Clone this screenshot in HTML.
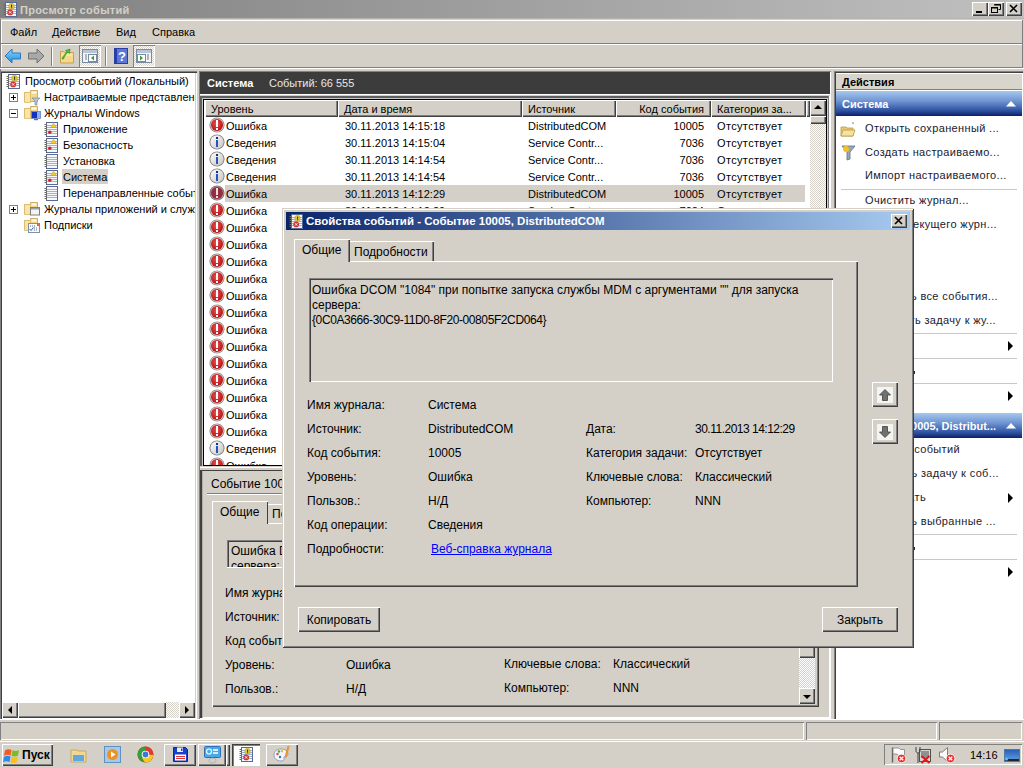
<!DOCTYPE html>
<html><head><meta charset="utf-8"><style>
html,body{margin:0;padding:0}
body{width:1024px;height:768px;overflow:hidden;position:relative;background:#d4d0c8;font-family:"Liberation Sans",sans-serif;font-size:11px;color:#000}
.t{position:absolute;white-space:pre;line-height:14px}
svg{overflow:visible}
</style></head><body>
<div style="position:absolute;left:0px;top:0px;width:1024px;height:18px;background:linear-gradient(to right,#808080,#c0c0c0)"></div>
<svg style="position:absolute;left:3px;top:2px" width="15" height="15" viewBox="0 0 15 15"><rect x="2.5" y="0.5" width="11" height="14" fill="#f6f8fc" stroke="#56699a"/><path d="M3 3.5h10M3 5.5h10M3 7.5h10M3 9.5h10M3 11.5h10" stroke="#9eb2d6"/><path d="M0.5 2.5h2.5M0.5 4.5h2.5M0.5 6.5h2.5M0.5 8.5h2.5M0.5 10.5h2.5M0.5 12.5h2.5" stroke="#6a6a6a"/><path d="M8.5 1.2c1.8 0 2.6 1.2 2.6 2.6v2.6H5.9V3.8c0-1.4.8-2.6 2.6-2.6z" fill="#e8cc28" stroke="#a89018" stroke-width="0.5"/><rect x="8" y="2.6" width="1.1" height="2.3" fill="#303030"/><rect x="8" y="5.3" width="1.1" height="0.9" fill="#303030"/><circle cx="7.2" cy="10.4" r="2.9" fill="#c83838"/><path d="M6 9.2l2.4 2.4M8.4 9.2l-2.4 2.4" stroke="#fff" stroke-width="0.9"/></svg>
<div class="t" style="left:20px;top:3px;font-weight:bold;color:#d4d0c8;letter-spacing:0.3px">Просмотр событий</div>
<div style="position:absolute;left:972px;top:2px;width:16px;height:14px;background:#d4d0c8;box-shadow:inset 1px 1px 0 #fff, inset -1px -1px 0 #404040, inset -2px -2px 0 #808080;"></div>
<div style="position:absolute;left:988px;top:2px;width:16px;height:14px;background:#d4d0c8;box-shadow:inset 1px 1px 0 #fff, inset -1px -1px 0 #404040, inset -2px -2px 0 #808080;"></div>
<div style="position:absolute;left:1006px;top:2px;width:16px;height:14px;background:#d4d0c8;box-shadow:inset 1px 1px 0 #fff, inset -1px -1px 0 #404040, inset -2px -2px 0 #808080;"></div>
<svg style="position:absolute;left:972px;top:2px" width="16" height="14" viewBox="0 0 16 14"><rect x="4" y="9" width="6" height="2" fill="#000"/></svg>
<svg style="position:absolute;left:988px;top:2px" width="16" height="14" viewBox="0 0 16 14"><path d="M6.5 2.5h6v5h-2" fill="none" stroke="#000"/><path d="M6 3h7" stroke="#000"/><rect x="3.5" y="5.5" width="6" height="5" fill="none" stroke="#000"/><path d="M3 6h7" stroke="#000"/></svg>
<svg style="position:absolute;left:1006px;top:2px" width="16" height="14" viewBox="0 0 16 14"><path d="M4 3l7 7M11 3l-7 7" stroke="#000" stroke-width="1.6"/></svg>
<div style="position:absolute;left:0px;top:18px;width:1024px;height:1px;background:#b8b4ac"></div>
<div style="position:absolute;left:0px;top:19px;width:1px;height:53px;background:#808080"></div>
<div style="position:absolute;left:1px;top:20px;width:1022px;height:1px;background:#fff"></div>
<div style="position:absolute;left:1px;top:20px;width:1px;height:24px;background:#fff"></div>
<div style="position:absolute;left:1px;top:43px;width:1022px;height:1px;background:#808080"></div>
<div style="position:absolute;left:1022px;top:20px;width:1px;height:24px;background:#808080"></div>
<div class="t" style="left:10px;top:25px;">Файл</div>
<div class="t" style="left:52px;top:25px;">Действие</div>
<div class="t" style="left:116px;top:25px;">Вид</div>
<div class="t" style="left:152px;top:25px;">Справка</div>
<div style="position:absolute;left:1px;top:44px;width:1022px;height:1px;background:#fff"></div>
<div style="position:absolute;left:1px;top:44px;width:1px;height:23px;background:#fff"></div>
<div style="position:absolute;left:1px;top:67px;width:1022px;height:1px;background:#808080"></div>
<div style="position:absolute;left:0px;top:68px;width:1024px;height:1px;background:#fff"></div>
<div style="position:absolute;left:1022px;top:44px;width:1px;height:24px;background:#808080"></div>
<svg style="position:absolute;left:4px;top:48px" width="18" height="16" viewBox="0 0 18 16"><defs><linearGradient id="ga" x1="0" y1="0" x2="0" y2="1"><stop offset="0" stop-color="#8fd8ff"/><stop offset="1" stop-color="#1a8ad8"/></linearGradient></defs><path d="M1 8l7-7v4h8.5v6H8v4z" fill="url(#ga)" stroke="#2a78c0" stroke-width="1"/></svg>
<svg style="position:absolute;left:27px;top:48px" width="18" height="16" viewBox="0 0 18 16"><path d="M17 8l-7-7v4H1.5v6H10v4z" fill="#a8a8a8" stroke="#707070" stroke-width="1"/></svg>
<div style="position:absolute;left:51px;top:47px;width:1px;height:19px;background:#808080"></div>
<div style="position:absolute;left:52px;top:47px;width:1px;height:19px;background:#fff"></div>
<svg style="position:absolute;left:59px;top:47px" width="17" height="17" viewBox="0 0 17 17"><path d="M1.5 4.5h3l1 1h9v10.5h-13z" fill="#f6d88a" stroke="#c8a050"/><path d="M2.5 8h11" stroke="#fff0c0"/><path d="M3 12c1-3 3-5 5-7l-1.5-1.5 4.5-1.5-0.5 4.5-1.5-1.5c-2 2-3.5 4-4.5 7z" fill="#50c040" stroke="#209020" stroke-width="0.6"/></svg>
<div style="position:absolute;left:79px;top:45px;width:22px;height:22px;background:repeating-conic-gradient(#fff 0 25%,#d4d0c8 0 50%) 0 0/2px 2px;box-shadow:inset 1px 1px 0 #808080, inset -1px -1px 0 #fff"></div>
<svg style="position:absolute;left:82px;top:49px" width="16" height="14" viewBox="0 0 16 14"><rect x="0.5" y="0.5" width="15" height="13" fill="#f4f4f4" stroke="#7a8aa0"/><rect x="1" y="1" width="14" height="3" fill="#b8c4d8"/><path d="M3 6h2M3 8h2M3 10h2" stroke="#6a7a90"/><rect x="6.5" y="5.5" width="8" height="7" fill="#fff" stroke="#7a8aa0"/><path d="M12 6.5v5l-3-2.5z" fill="#30a030"/></svg>
<div style="position:absolute;left:105px;top:47px;width:1px;height:19px;background:#808080"></div>
<div style="position:absolute;left:106px;top:47px;width:1px;height:19px;background:#fff"></div>
<svg style="position:absolute;left:114px;top:48px" width="14" height="16" viewBox="0 0 14 16"><rect x="0" y="0" width="14" height="16" fill="#2a3ea8"/><rect x="3" y="1" width="10" height="14" fill="#5a78d8"/><text x="8" y="13" font-family="Liberation Sans" font-weight="bold" font-size="13" fill="#fff" text-anchor="middle">?</text></svg>
<div style="position:absolute;left:133px;top:45px;width:22px;height:22px;background:repeating-conic-gradient(#fff 0 25%,#d4d0c8 0 50%) 0 0/2px 2px;box-shadow:inset 1px 1px 0 #808080, inset -1px -1px 0 #fff"></div>
<svg style="position:absolute;left:136px;top:49px" width="16" height="14" viewBox="0 0 16 14"><rect x="0.5" y="0.5" width="15" height="13" fill="#f4f4f4" stroke="#7a8aa0"/><rect x="1" y="1" width="14" height="3" fill="#b8c4d8"/><path d="M11 6h2M11 8h2M11 10h2" stroke="#6a7a90"/><rect x="1.5" y="5.5" width="8" height="7" fill="#fff" stroke="#7a8aa0"/><path d="M4 6.5v5l3-2.5z" fill="#30a030"/></svg>
<div style="position:absolute;left:0px;top:71px;width:197px;height:648px;background:#fff;box-shadow:inset 1px 1px 0 #808080, inset 2px 2px 0 #404040, inset -1px -1px 0 #fff, inset -2px -2px 0 #d4d0c8"></div>
<svg style="position:absolute;left:6px;top:74px" width="15" height="15" viewBox="0 0 15 15"><rect x="2.5" y="0.5" width="11" height="14" fill="#f6f8fc" stroke="#56699a"/><path d="M3 3.5h10M3 5.5h10M3 7.5h10M3 9.5h10M3 11.5h10" stroke="#9eb2d6"/><path d="M0.5 2.5h2.5M0.5 4.5h2.5M0.5 6.5h2.5M0.5 8.5h2.5M0.5 10.5h2.5M0.5 12.5h2.5" stroke="#6a6a6a"/><path d="M8.5 1.2c1.8 0 2.6 1.2 2.6 2.6v2.6H5.9V3.8c0-1.4.8-2.6 2.6-2.6z" fill="#e8cc28" stroke="#a89018" stroke-width="0.5"/><rect x="8" y="2.6" width="1.1" height="2.3" fill="#303030"/><rect x="8" y="5.3" width="1.1" height="0.9" fill="#303030"/><circle cx="7.2" cy="10.4" r="2.9" fill="#c83838"/><path d="M6 9.2l2.4 2.4M8.4 9.2l-2.4 2.4" stroke="#fff" stroke-width="0.9"/></svg>
<div class="t" style="left:25px;top:74px;">Просмотр событий (Локальный)</div>
<svg style="position:absolute;left:9px;top:93px" width="9" height="9" viewBox="0 0 9 9"><rect x="0.5" y="0.5" width="8" height="8" fill="#fff" stroke="#808080"/><path d="M2 4.5h5" stroke="#000"/><path d="M4.5 2v5" stroke="#000"/></svg>
<svg style="position:absolute;left:24px;top:89px" width="16" height="16" viewBox="0 0 16 16"><path d="M0.5 12.5V3.5h6v-2h7v11z" fill="#f2d890" stroke="#d0b060"/><rect x="7.5" y="2.5" width="5" height="2" fill="#fffbe8"/><path d="M0.5 13.5V3.5h6v10z" fill="#f8e6a8" stroke="#d8b868" stroke-width="0.8"/><path d="M8 9h8l-3 3v4h-2v-4z" fill="#b8c8d0" stroke="#708090" stroke-width="0.6"/></svg>
<div class="t" style="left:44px;top:90px;width:151px;overflow:hidden">Настраиваемые представлени</div>
<svg style="position:absolute;left:9px;top:109px" width="9" height="9" viewBox="0 0 9 9"><rect x="0.5" y="0.5" width="8" height="8" fill="#fff" stroke="#808080"/><path d="M2 4.5h5" stroke="#000"/></svg>
<svg style="position:absolute;left:24px;top:105px" width="16" height="16" viewBox="0 0 16 16"><path d="M0.5 12.5V3.5h6v-2h7v11z" fill="#f2d890" stroke="#d0b060"/><rect x="7.5" y="2.5" width="5" height="2" fill="#fffbe8"/><path d="M0.5 13.5V3.5h6v10z" fill="#f8e6a8" stroke="#d8b868" stroke-width="0.8"/><rect x="7.5" y="6.5" width="9" height="7" fill="#8ab0f0" stroke="#6080c0" stroke-width="0.8"/><rect x="8" y="7" width="5" height="6" fill="#1030c0"/><rect x="10" y="14" width="4" height="1.2" fill="#707070"/></svg>
<div class="t" style="left:44px;top:106px;">Журналы Windows</div>
<svg style="position:absolute;left:44px;top:122px" width="15" height="15" viewBox="0 0 15 15"><rect x="2.5" y="0.5" width="11" height="14" fill="#f6f8fc" stroke="#56699a"/><path d="M3 3.5h10M3 5.5h10M3 7.5h10M3 9.5h10M3 11.5h10" stroke="#9eb2d6"/><path d="M0.5 2.5h2.5M0.5 4.5h2.5M0.5 6.5h2.5M0.5 8.5h2.5M0.5 10.5h2.5M0.5 12.5h2.5" stroke="#6a6a6a"/><path d="M9.5 1.5l3 4h-6z" fill="#f4d02a" stroke="#c0a020" stroke-width="0.6"/><circle cx="5.8" cy="10.2" r="1.7" fill="#c82828"/></svg>
<div class="t" style="left:63px;top:122px;">Приложение</div>
<svg style="position:absolute;left:44px;top:138px" width="15" height="15" viewBox="0 0 15 15"><rect x="2.5" y="0.5" width="11" height="14" fill="#f6f8fc" stroke="#56699a"/><path d="M3 3.5h10M3 5.5h10M3 7.5h10M3 9.5h10M3 11.5h10" stroke="#9eb2d6"/><path d="M0.5 2.5h2.5M0.5 4.5h2.5M0.5 6.5h2.5M0.5 8.5h2.5M0.5 10.5h2.5M0.5 12.5h2.5" stroke="#6a6a6a"/><path d="M9.5 1.5l3 4h-6z" fill="#f4d02a" stroke="#c0a020" stroke-width="0.6"/><circle cx="5.8" cy="10.2" r="1.7" fill="#c82828"/></svg>
<div class="t" style="left:63px;top:138px;">Безопасность</div>
<svg style="position:absolute;left:44px;top:154px" width="15" height="15" viewBox="0 0 15 15"><rect x="2.5" y="0.5" width="11" height="14" fill="#f6f8fc" stroke="#56699a"/><path d="M3 3.5h10M3 5.5h10M3 7.5h10M3 9.5h10M3 11.5h10" stroke="#9eb2d6"/><path d="M0.5 2.5h2.5M0.5 4.5h2.5M0.5 6.5h2.5M0.5 8.5h2.5M0.5 10.5h2.5M0.5 12.5h2.5" stroke="#6a6a6a"/></svg>
<div class="t" style="left:63px;top:154px;">Установка</div>
<div style="position:absolute;left:62px;top:169px;width:46px;height:15px;background:#d4d0c8"></div>
<svg style="position:absolute;left:44px;top:170px" width="15" height="15" viewBox="0 0 15 15"><rect x="2.5" y="0.5" width="11" height="14" fill="#f6f8fc" stroke="#56699a"/><path d="M3 3.5h10M3 5.5h10M3 7.5h10M3 9.5h10M3 11.5h10" stroke="#9eb2d6"/><path d="M0.5 2.5h2.5M0.5 4.5h2.5M0.5 6.5h2.5M0.5 8.5h2.5M0.5 10.5h2.5M0.5 12.5h2.5" stroke="#6a6a6a"/><path d="M9.5 1.5l3 4h-6z" fill="#f4d02a" stroke="#c0a020" stroke-width="0.6"/><circle cx="5.8" cy="10.2" r="1.7" fill="#c82828"/></svg>
<div class="t" style="left:63px;top:170px;">Система</div>
<svg style="position:absolute;left:44px;top:186px" width="15" height="15" viewBox="0 0 15 15"><rect x="2.5" y="0.5" width="11" height="14" fill="#f6f8fc" stroke="#56699a"/><path d="M3 3.5h10M3 5.5h10M3 7.5h10M3 9.5h10M3 11.5h10" stroke="#9eb2d6"/><path d="M0.5 2.5h2.5M0.5 4.5h2.5M0.5 6.5h2.5M0.5 8.5h2.5M0.5 10.5h2.5M0.5 12.5h2.5" stroke="#6a6a6a"/></svg>
<div class="t" style="left:63px;top:186px;width:132px;overflow:hidden">Перенаправленные событ</div>
<svg style="position:absolute;left:9px;top:205px" width="9" height="9" viewBox="0 0 9 9"><rect x="0.5" y="0.5" width="8" height="8" fill="#fff" stroke="#808080"/><path d="M2 4.5h5" stroke="#000"/><path d="M4.5 2v5" stroke="#000"/></svg>
<svg style="position:absolute;left:24px;top:201px" width="16" height="16" viewBox="0 0 16 16"><path d="M0.5 12.5V3.5h6v-2h7v11z" fill="#f2d890" stroke="#d0b060"/><rect x="7.5" y="2.5" width="5" height="2" fill="#fffbe8"/><path d="M0.5 13.5V3.5h6v10z" fill="#f8e6a8" stroke="#d8b868" stroke-width="0.8"/><rect x="6.5" y="6.5" width="9" height="7.5" fill="#f4f4f4" stroke="#808080" stroke-width="1"/><rect x="7" y="7" width="8" height="1.5" fill="#a0a0a0"/></svg>
<div class="t" style="left:44px;top:202px;width:151px;overflow:hidden">Журналы приложений и служ</div>
<svg style="position:absolute;left:24px;top:217px" width="16" height="16" viewBox="0 0 16 16"><path d="M0.5 12.5V3.5h6v-2h7v11z" fill="#f2d890" stroke="#d0b060"/><rect x="7.5" y="2.5" width="5" height="2" fill="#fffbe8"/><path d="M0.5 13.5V3.5h6v10z" fill="#f8e6a8" stroke="#d8b868" stroke-width="0.8"/><rect x="4.5" y="6.5" width="11" height="9" fill="#fafafa" stroke="#8090a8" stroke-width="1"/><path d="M6 9h1M8 9h1M10 9h1M10 11h1M12 11h1M10 13h1M12 13h1" stroke="#607090"/><path d="M5.5 12l1.5 1.5 2.5-3" fill="none" stroke="#2060c0" stroke-width="1"/><rect x="13" y="6" width="3" height="3" fill="#e06060"/></svg>
<div class="t" style="left:44px;top:218px;">Подписки</div>
<div style="position:absolute;left:2px;top:702px;width:193px;height:16px;background:repeating-conic-gradient(#fff 0 25%,#d4d0c8 0 50%) 0 0/2px 2px"></div>
<div style="position:absolute;left:2px;top:702px;width:16px;height:16px;background:#d4d0c8;box-shadow:inset 1px 1px 0 #fff, inset -1px -1px 0 #404040, inset -2px -2px 0 #808080;"></div>
<svg style="position:absolute;left:2px;top:702px" width="16" height="16" viewBox="0 0 16 16"><path d="M6 8l4-4v8z" fill="#000"/></svg>
<div style="position:absolute;left:18px;top:702px;width:148px;height:16px;background:#d4d0c8;box-shadow:inset 1px 1px 0 #fff, inset -1px -1px 0 #404040, inset -2px -2px 0 #808080;"></div>
<div style="position:absolute;left:179px;top:702px;width:16px;height:16px;background:#d4d0c8;box-shadow:inset 1px 1px 0 #fff, inset -1px -1px 0 #404040, inset -2px -2px 0 #808080;"></div>
<svg style="position:absolute;left:179px;top:702px" width="16" height="16" viewBox="0 0 16 16"><path d="M10 8l-4-4v8z" fill="#000"/></svg>
<div style="position:absolute;left:199px;top:71px;width:632px;height:648px;box-shadow:inset 1px 1px 0 #808080, inset -1px -1px 0 #fff"></div>
<div style="position:absolute;left:200px;top:72px;width:630px;height:22px;background:#3c3c3c"></div>
<div class="t" style="left:207px;top:76px;font-weight:bold;color:#fff">Система</div>
<div class="t" style="left:269px;top:76px;color:#e8e8e8">Событий: 66 555</div>
<div style="position:absolute;left:200px;top:94px;width:630px;height:1px;background:#fff"></div>
<div style="position:absolute;left:204px;top:100px;width:622px;height:365px;background:#fff"></div>
<div style="position:absolute;left:200px;top:96px;width:630px;height:2px;background:#606060"></div>
<div style="position:absolute;left:200px;top:96px;width:2px;height:370px;background:#606060"></div>
<div style="position:absolute;left:202px;top:98px;width:626px;height:1px;background:#c8c8c8"></div>
<div style="position:absolute;left:202px;top:98px;width:1px;height:368px;background:#c8c8c8"></div>
<div style="position:absolute;left:203px;top:99px;width:624px;height:1px;background:#000"></div>
<div style="position:absolute;left:203px;top:99px;width:1px;height:367px;background:#000"></div>
<div style="position:absolute;left:203px;top:465px;width:624px;height:1px;background:#000"></div>
<div style="position:absolute;left:826px;top:99px;width:1px;height:367px;background:#000"></div>
<div style="position:absolute;left:827px;top:98px;width:1px;height:368px;background:#d4d0c8"></div>
<div style="position:absolute;left:828px;top:96px;width:1px;height:371px;background:#808080"></div>
<div style="position:absolute;left:829px;top:96px;width:1px;height:371px;background:#fff"></div>
<div style="position:absolute;left:205px;top:100px;width:133px;height:17px;background:#d4d0c8;box-shadow:inset 1px 1px 0 #fff, inset -1px -1px 0 #404040, inset -2px -2px 0 #808080;"></div>
<div class="t" style="left:211px;top:102px;">Уровень</div>
<div style="position:absolute;left:338px;top:100px;width:184px;height:17px;background:#d4d0c8;box-shadow:inset 1px 1px 0 #fff, inset -1px -1px 0 #404040, inset -2px -2px 0 #808080;"></div>
<div class="t" style="left:344px;top:102px;">Дата и время</div>
<div style="position:absolute;left:522px;top:100px;width:94px;height:17px;background:#d4d0c8;box-shadow:inset 1px 1px 0 #fff, inset -1px -1px 0 #404040, inset -2px -2px 0 #808080;"></div>
<div class="t" style="left:528px;top:102px;">Источник</div>
<div style="position:absolute;left:616px;top:100px;width:95px;height:17px;background:#d4d0c8;box-shadow:inset 1px 1px 0 #fff, inset -1px -1px 0 #404040, inset -2px -2px 0 #808080;"></div>
<div class="t" style="left:616px;top:102px;width:88px;text-align:right">Код события</div>
<div style="position:absolute;left:711px;top:100px;width:95px;height:17px;background:#d4d0c8;box-shadow:inset 1px 1px 0 #fff, inset -1px -1px 0 #404040, inset -2px -2px 0 #808080;"></div>
<div class="t" style="left:717px;top:102px;">Категория за...</div>
<div style="position:absolute;left:806px;top:100px;width:4px;height:17px;background:#d4d0c8;box-shadow:inset 1px 1px 0 #fff, inset -1px -1px 0 #404040, inset -2px -2px 0 #808080;"></div>
<div style="position:absolute;left:810px;top:100px;width:16px;height:365px;background:repeating-conic-gradient(#fff 0 25%,#d4d0c8 0 50%) 0 0/2px 2px"></div>
<div style="position:absolute;left:810px;top:100px;width:16px;height:16px;background:#d4d0c8;box-shadow:inset 1px 1px 0 #fff, inset -1px -1px 0 #404040, inset -2px -2px 0 #808080;"></div>
<svg style="position:absolute;left:810px;top:100px" width="16" height="16" viewBox="0 0 16 16"><path d="M8 5l4 4H4z" fill="#000"/></svg>
<div style="position:absolute;left:810px;top:116px;width:16px;height:8px;background:#d4d0c8;box-shadow:inset 1px 1px 0 #fff, inset -1px -1px 0 #404040, inset -2px -2px 0 #808080;"></div>
<div style="position:absolute;left:810px;top:449px;width:16px;height:16px;background:#d4d0c8;box-shadow:inset 1px 1px 0 #fff, inset -1px -1px 0 #404040, inset -2px -2px 0 #808080;"></div>
<svg style="position:absolute;left:810px;top:449px" width="16" height="16" viewBox="0 0 16 16"><path d="M8 11l4-4H4z" fill="#000"/></svg>
<div style="position:absolute;left:205px;top:117px;width:605px;height:348px;overflow:hidden">
<svg style="position:absolute;left:4px;top:0px" width="16" height="16" viewBox="0 0 16 16"><defs><radialGradient id="ge" cx="45%" cy="40%" r="60%"><stop offset="0" stop-color="#e85050"/><stop offset="0.75" stop-color="#c42222"/><stop offset="1" stop-color="#a81818"/></radialGradient></defs><circle cx="8" cy="8" r="7.6" fill="#8a8a8a"/><circle cx="8" cy="8" r="6.7" fill="#f0c8c8"/><circle cx="8" cy="8" r="6" fill="url(#ge)"/><rect x="7" y="3" width="2" height="7" fill="#fff"/><rect x="7" y="11" width="2" height="2" fill="#fff"/></svg>
<div class="t" style="left:21px;top:2px;">Ошибка</div>
<div class="t" style="left:140px;top:2px;">30.11.2013 14:15:18</div>
<div class="t" style="left:323px;top:2px;">DistributedCOM</div>
<div class="t" style="left:408px;top:2px;width:91px;text-align:right">10005</div>
<div class="t" style="left:512px;top:2px;letter-spacing:0.35px">Отсутствует</div>
<svg style="position:absolute;left:4px;top:17px" width="16" height="16" viewBox="0 0 16 16"><defs><linearGradient id="gi" x1="0" y1="0" x2="1" y2="1"><stop offset="0" stop-color="#ffffff"/><stop offset="1" stop-color="#c4c4c4"/></linearGradient></defs><circle cx="8" cy="8" r="7.6" fill="#7c7c7c"/><circle cx="8" cy="8" r="6.7" fill="url(#gi)"/><rect x="7" y="3" width="2" height="2" fill="#1a2f80"/><rect x="7" y="6" width="2" height="7" fill="#2a55b8"/></svg>
<div class="t" style="left:21px;top:19px;">Сведения</div>
<div class="t" style="left:140px;top:19px;">30.11.2013 14:15:04</div>
<div class="t" style="left:323px;top:19px;">Service Contr...</div>
<div class="t" style="left:408px;top:19px;width:91px;text-align:right">7036</div>
<div class="t" style="left:512px;top:19px;letter-spacing:0.35px">Отсутствует</div>
<svg style="position:absolute;left:4px;top:34px" width="16" height="16" viewBox="0 0 16 16"><circle cx="8" cy="8" r="7.6" fill="#7c7c7c"/><circle cx="8" cy="8" r="6.7" fill="url(#gi)"/><rect x="7" y="3" width="2" height="2" fill="#1a2f80"/><rect x="7" y="6" width="2" height="7" fill="#2a55b8"/></svg>
<div class="t" style="left:21px;top:36px;">Сведения</div>
<div class="t" style="left:140px;top:36px;">30.11.2013 14:14:54</div>
<div class="t" style="left:323px;top:36px;">Service Contr...</div>
<div class="t" style="left:408px;top:36px;width:91px;text-align:right">7036</div>
<div class="t" style="left:512px;top:36px;letter-spacing:0.35px">Отсутствует</div>
<svg style="position:absolute;left:4px;top:51px" width="16" height="16" viewBox="0 0 16 16"><circle cx="8" cy="8" r="7.6" fill="#7c7c7c"/><circle cx="8" cy="8" r="6.7" fill="url(#gi)"/><rect x="7" y="3" width="2" height="2" fill="#1a2f80"/><rect x="7" y="6" width="2" height="7" fill="#2a55b8"/></svg>
<div class="t" style="left:21px;top:53px;">Сведения</div>
<div class="t" style="left:140px;top:53px;">30.11.2013 14:14:54</div>
<div class="t" style="left:323px;top:53px;">Service Contr...</div>
<div class="t" style="left:408px;top:53px;width:91px;text-align:right">7036</div>
<div class="t" style="left:512px;top:53px;letter-spacing:0.35px">Отсутствует</div>
<div style="position:absolute;left:20px;top:68px;width:580px;height:17px;background:#d4d0c8"></div>
<svg style="position:absolute;left:4px;top:68px" width="16" height="16" viewBox="0 0 16 16"><circle cx="8" cy="8" r="7.6" fill="#7a6a70"/><circle cx="8" cy="8" r="6.7" fill="#b8a0a8"/><circle cx="8" cy="8" r="6" fill="#962a40"/><rect x="7" y="3" width="2" height="7" fill="#e8e0e0"/><rect x="7" y="11" width="2" height="2" fill="#e8e0e0"/></svg>
<div class="t" style="left:21px;top:70px;">Ошибка</div>
<div class="t" style="left:140px;top:70px;">30.11.2013 14:12:29</div>
<div class="t" style="left:323px;top:70px;">DistributedCOM</div>
<div class="t" style="left:408px;top:70px;width:91px;text-align:right">10005</div>
<div class="t" style="left:512px;top:70px;letter-spacing:0.35px">Отсутствует</div>
<svg style="position:absolute;left:4px;top:85px" width="16" height="16" viewBox="0 0 16 16"><circle cx="8" cy="8" r="7.6" fill="#8a8a8a"/><circle cx="8" cy="8" r="6.7" fill="#f0c8c8"/><circle cx="8" cy="8" r="6" fill="url(#ge)"/><rect x="7" y="3" width="2" height="7" fill="#fff"/><rect x="7" y="11" width="2" height="2" fill="#fff"/></svg>
<div class="t" style="left:21px;top:87px;">Ошибка</div>
<div class="t" style="left:140px;top:87px;">30.11.2013 14:12:29</div>
<div class="t" style="left:323px;top:87px;">Service Contr...</div>
<div class="t" style="left:408px;top:87px;width:91px;text-align:right">7034</div>
<div class="t" style="left:512px;top:87px;letter-spacing:0.35px">Отсутствует</div>
<svg style="position:absolute;left:4px;top:102px" width="16" height="16" viewBox="0 0 16 16"><circle cx="8" cy="8" r="7.6" fill="#8a8a8a"/><circle cx="8" cy="8" r="6.7" fill="#f0c8c8"/><circle cx="8" cy="8" r="6" fill="url(#ge)"/><rect x="7" y="3" width="2" height="7" fill="#fff"/><rect x="7" y="11" width="2" height="2" fill="#fff"/></svg>
<div class="t" style="left:21px;top:104px;">Ошибка</div>
<div class="t" style="left:140px;top:104px;">30.11.2013 14:12:29</div>
<div class="t" style="left:323px;top:104px;">DistributedCOM</div>
<div class="t" style="left:408px;top:104px;width:91px;text-align:right">10005</div>
<div class="t" style="left:512px;top:104px;letter-spacing:0.35px">Отсутствует</div>
<svg style="position:absolute;left:4px;top:119px" width="16" height="16" viewBox="0 0 16 16"><circle cx="8" cy="8" r="7.6" fill="#8a8a8a"/><circle cx="8" cy="8" r="6.7" fill="#f0c8c8"/><circle cx="8" cy="8" r="6" fill="url(#ge)"/><rect x="7" y="3" width="2" height="7" fill="#fff"/><rect x="7" y="11" width="2" height="2" fill="#fff"/></svg>
<div class="t" style="left:21px;top:121px;">Ошибка</div>
<div class="t" style="left:140px;top:121px;">30.11.2013 14:12:29</div>
<div class="t" style="left:323px;top:121px;">DistributedCOM</div>
<div class="t" style="left:408px;top:121px;width:91px;text-align:right">10005</div>
<div class="t" style="left:512px;top:121px;letter-spacing:0.35px">Отсутствует</div>
<svg style="position:absolute;left:4px;top:136px" width="16" height="16" viewBox="0 0 16 16"><circle cx="8" cy="8" r="7.6" fill="#8a8a8a"/><circle cx="8" cy="8" r="6.7" fill="#f0c8c8"/><circle cx="8" cy="8" r="6" fill="url(#ge)"/><rect x="7" y="3" width="2" height="7" fill="#fff"/><rect x="7" y="11" width="2" height="2" fill="#fff"/></svg>
<div class="t" style="left:21px;top:138px;">Ошибка</div>
<div class="t" style="left:140px;top:138px;">30.11.2013 14:12:29</div>
<div class="t" style="left:323px;top:138px;">DistributedCOM</div>
<div class="t" style="left:408px;top:138px;width:91px;text-align:right">10005</div>
<div class="t" style="left:512px;top:138px;letter-spacing:0.35px">Отсутствует</div>
<svg style="position:absolute;left:4px;top:153px" width="16" height="16" viewBox="0 0 16 16"><circle cx="8" cy="8" r="7.6" fill="#8a8a8a"/><circle cx="8" cy="8" r="6.7" fill="#f0c8c8"/><circle cx="8" cy="8" r="6" fill="url(#ge)"/><rect x="7" y="3" width="2" height="7" fill="#fff"/><rect x="7" y="11" width="2" height="2" fill="#fff"/></svg>
<div class="t" style="left:21px;top:155px;">Ошибка</div>
<div class="t" style="left:140px;top:155px;">30.11.2013 14:12:29</div>
<div class="t" style="left:323px;top:155px;">DistributedCOM</div>
<div class="t" style="left:408px;top:155px;width:91px;text-align:right">10005</div>
<div class="t" style="left:512px;top:155px;letter-spacing:0.35px">Отсутствует</div>
<svg style="position:absolute;left:4px;top:170px" width="16" height="16" viewBox="0 0 16 16"><circle cx="8" cy="8" r="7.6" fill="#8a8a8a"/><circle cx="8" cy="8" r="6.7" fill="#f0c8c8"/><circle cx="8" cy="8" r="6" fill="url(#ge)"/><rect x="7" y="3" width="2" height="7" fill="#fff"/><rect x="7" y="11" width="2" height="2" fill="#fff"/></svg>
<div class="t" style="left:21px;top:172px;">Ошибка</div>
<div class="t" style="left:140px;top:172px;">30.11.2013 14:12:29</div>
<div class="t" style="left:323px;top:172px;">DistributedCOM</div>
<div class="t" style="left:408px;top:172px;width:91px;text-align:right">10005</div>
<div class="t" style="left:512px;top:172px;letter-spacing:0.35px">Отсутствует</div>
<svg style="position:absolute;left:4px;top:187px" width="16" height="16" viewBox="0 0 16 16"><circle cx="8" cy="8" r="7.6" fill="#8a8a8a"/><circle cx="8" cy="8" r="6.7" fill="#f0c8c8"/><circle cx="8" cy="8" r="6" fill="url(#ge)"/><rect x="7" y="3" width="2" height="7" fill="#fff"/><rect x="7" y="11" width="2" height="2" fill="#fff"/></svg>
<div class="t" style="left:21px;top:189px;">Ошибка</div>
<div class="t" style="left:140px;top:189px;">30.11.2013 14:12:29</div>
<div class="t" style="left:323px;top:189px;">DistributedCOM</div>
<div class="t" style="left:408px;top:189px;width:91px;text-align:right">10005</div>
<div class="t" style="left:512px;top:189px;letter-spacing:0.35px">Отсутствует</div>
<svg style="position:absolute;left:4px;top:204px" width="16" height="16" viewBox="0 0 16 16"><circle cx="8" cy="8" r="7.6" fill="#8a8a8a"/><circle cx="8" cy="8" r="6.7" fill="#f0c8c8"/><circle cx="8" cy="8" r="6" fill="url(#ge)"/><rect x="7" y="3" width="2" height="7" fill="#fff"/><rect x="7" y="11" width="2" height="2" fill="#fff"/></svg>
<div class="t" style="left:21px;top:206px;">Ошибка</div>
<div class="t" style="left:140px;top:206px;">30.11.2013 14:12:29</div>
<div class="t" style="left:323px;top:206px;">DistributedCOM</div>
<div class="t" style="left:408px;top:206px;width:91px;text-align:right">10005</div>
<div class="t" style="left:512px;top:206px;letter-spacing:0.35px">Отсутствует</div>
<svg style="position:absolute;left:4px;top:221px" width="16" height="16" viewBox="0 0 16 16"><circle cx="8" cy="8" r="7.6" fill="#8a8a8a"/><circle cx="8" cy="8" r="6.7" fill="#f0c8c8"/><circle cx="8" cy="8" r="6" fill="url(#ge)"/><rect x="7" y="3" width="2" height="7" fill="#fff"/><rect x="7" y="11" width="2" height="2" fill="#fff"/></svg>
<div class="t" style="left:21px;top:223px;">Ошибка</div>
<div class="t" style="left:140px;top:223px;">30.11.2013 14:12:29</div>
<div class="t" style="left:323px;top:223px;">DistributedCOM</div>
<div class="t" style="left:408px;top:223px;width:91px;text-align:right">10005</div>
<div class="t" style="left:512px;top:223px;letter-spacing:0.35px">Отсутствует</div>
<svg style="position:absolute;left:4px;top:238px" width="16" height="16" viewBox="0 0 16 16"><circle cx="8" cy="8" r="7.6" fill="#8a8a8a"/><circle cx="8" cy="8" r="6.7" fill="#f0c8c8"/><circle cx="8" cy="8" r="6" fill="url(#ge)"/><rect x="7" y="3" width="2" height="7" fill="#fff"/><rect x="7" y="11" width="2" height="2" fill="#fff"/></svg>
<div class="t" style="left:21px;top:240px;">Ошибка</div>
<div class="t" style="left:140px;top:240px;">30.11.2013 14:12:29</div>
<div class="t" style="left:323px;top:240px;">DistributedCOM</div>
<div class="t" style="left:408px;top:240px;width:91px;text-align:right">10005</div>
<div class="t" style="left:512px;top:240px;letter-spacing:0.35px">Отсутствует</div>
<svg style="position:absolute;left:4px;top:255px" width="16" height="16" viewBox="0 0 16 16"><circle cx="8" cy="8" r="7.6" fill="#8a8a8a"/><circle cx="8" cy="8" r="6.7" fill="#f0c8c8"/><circle cx="8" cy="8" r="6" fill="url(#ge)"/><rect x="7" y="3" width="2" height="7" fill="#fff"/><rect x="7" y="11" width="2" height="2" fill="#fff"/></svg>
<div class="t" style="left:21px;top:257px;">Ошибка</div>
<div class="t" style="left:140px;top:257px;">30.11.2013 14:12:29</div>
<div class="t" style="left:323px;top:257px;">DistributedCOM</div>
<div class="t" style="left:408px;top:257px;width:91px;text-align:right">10005</div>
<div class="t" style="left:512px;top:257px;letter-spacing:0.35px">Отсутствует</div>
<svg style="position:absolute;left:4px;top:272px" width="16" height="16" viewBox="0 0 16 16"><circle cx="8" cy="8" r="7.6" fill="#8a8a8a"/><circle cx="8" cy="8" r="6.7" fill="#f0c8c8"/><circle cx="8" cy="8" r="6" fill="url(#ge)"/><rect x="7" y="3" width="2" height="7" fill="#fff"/><rect x="7" y="11" width="2" height="2" fill="#fff"/></svg>
<div class="t" style="left:21px;top:274px;">Ошибка</div>
<div class="t" style="left:140px;top:274px;">30.11.2013 14:12:29</div>
<div class="t" style="left:323px;top:274px;">DistributedCOM</div>
<div class="t" style="left:408px;top:274px;width:91px;text-align:right">10005</div>
<div class="t" style="left:512px;top:274px;letter-spacing:0.35px">Отсутствует</div>
<svg style="position:absolute;left:4px;top:289px" width="16" height="16" viewBox="0 0 16 16"><circle cx="8" cy="8" r="7.6" fill="#8a8a8a"/><circle cx="8" cy="8" r="6.7" fill="#f0c8c8"/><circle cx="8" cy="8" r="6" fill="url(#ge)"/><rect x="7" y="3" width="2" height="7" fill="#fff"/><rect x="7" y="11" width="2" height="2" fill="#fff"/></svg>
<div class="t" style="left:21px;top:291px;">Ошибка</div>
<div class="t" style="left:140px;top:291px;">30.11.2013 14:12:29</div>
<div class="t" style="left:323px;top:291px;">DistributedCOM</div>
<div class="t" style="left:408px;top:291px;width:91px;text-align:right">10005</div>
<div class="t" style="left:512px;top:291px;letter-spacing:0.35px">Отсутствует</div>
<svg style="position:absolute;left:4px;top:306px" width="16" height="16" viewBox="0 0 16 16"><circle cx="8" cy="8" r="7.6" fill="#8a8a8a"/><circle cx="8" cy="8" r="6.7" fill="#f0c8c8"/><circle cx="8" cy="8" r="6" fill="url(#ge)"/><rect x="7" y="3" width="2" height="7" fill="#fff"/><rect x="7" y="11" width="2" height="2" fill="#fff"/></svg>
<div class="t" style="left:21px;top:308px;">Ошибка</div>
<div class="t" style="left:140px;top:308px;">30.11.2013 14:12:29</div>
<div class="t" style="left:323px;top:308px;">DistributedCOM</div>
<div class="t" style="left:408px;top:308px;width:91px;text-align:right">10005</div>
<div class="t" style="left:512px;top:308px;letter-spacing:0.35px">Отсутствует</div>
<svg style="position:absolute;left:4px;top:323px" width="16" height="16" viewBox="0 0 16 16"><circle cx="8" cy="8" r="7.6" fill="#7c7c7c"/><circle cx="8" cy="8" r="6.7" fill="url(#gi)"/><rect x="7" y="3" width="2" height="2" fill="#1a2f80"/><rect x="7" y="6" width="2" height="7" fill="#2a55b8"/></svg>
<div class="t" style="left:21px;top:325px;">Сведения</div>
<div class="t" style="left:140px;top:325px;">30.11.2013 14:10:11</div>
<div class="t" style="left:323px;top:325px;">Service Contr...</div>
<div class="t" style="left:408px;top:325px;width:91px;text-align:right">7036</div>
<div class="t" style="left:512px;top:325px;letter-spacing:0.35px">Отсутствует</div>
<svg style="position:absolute;left:4px;top:340px" width="16" height="16" viewBox="0 0 16 16"><circle cx="8" cy="8" r="7.6" fill="#8a8a8a"/><circle cx="8" cy="8" r="6.7" fill="#f0c8c8"/><circle cx="8" cy="8" r="6" fill="url(#ge)"/><rect x="7" y="3" width="2" height="7" fill="#fff"/><rect x="7" y="11" width="2" height="2" fill="#fff"/></svg>
<div class="t" style="left:21px;top:342px;">Ошибка</div>
<div class="t" style="left:140px;top:342px;">30.11.2013 14:10:11</div>
<div class="t" style="left:323px;top:342px;">DistributedCOM</div>
<div class="t" style="left:408px;top:342px;width:91px;text-align:right">10005</div>
<div class="t" style="left:512px;top:342px;letter-spacing:0.35px">Отсутствует</div>
</div>
<div style="position:absolute;left:200px;top:467px;width:630px;height:1px;background:#fff"></div>
<div style="position:absolute;left:200px;top:470px;width:630px;height:1px;background:#404040"></div>
<div style="position:absolute;left:200px;top:470px;width:630px;height:248px;box-shadow:inset 2px 1px 0 #404040, inset 3px 0 0 #b0b0b0, inset -1px -1px 0 #fff"></div>
<div class="t" style="left:211px;top:477px;font-size:12px">Событие 10005, DistributedCOM</div>
<div style="position:absolute;left:207px;top:493px;width:618px;height:1px;background:#808080"></div>
<div style="position:absolute;left:207px;top:494px;width:618px;height:1px;background:#fff"></div>
<div style="position:absolute;left:216px;top:504px;width:112px;height:19px;background:#d4d0c8;box-shadow:inset 1px 1px 0 #fff, inset -1px 0 0 #404040"></div>
<div class="t" style="left:272px;top:507px;font-size:12px">Подробности</div>
<div style="position:absolute;left:212px;top:523px;width:607px;height:184px;box-shadow:inset 1px 1px 0 #fff, inset -1px -1px 0 #404040, inset -2px -2px 0 #808080"></div>
<div style="position:absolute;left:212px;top:501px;width:56px;height:23px;background:#d4d0c8;box-shadow:inset 1px 1px 0 #fff, inset -1px 0 0 #404040"></div>
<div class="t" style="left:220px;top:505px;font-size:12px">Общие</div>
<div style="position:absolute;left:227px;top:540px;width:590px;height:28px;box-shadow:inset 1px 1px 0 #808080, inset 2px 2px 0 #404040"></div>
<div style="position:absolute;left:229px;top:542px;width:586px;height:26px;overflow:hidden">
<div class="t" style="left:2px;top:2px;font-size:12px">Ошибка DCOM "1084" при попытке запуска службы MDM с аргументами "" для запуска</div>
<div class="t" style="left:2px;top:17px;font-size:12px">сервера:</div>
</div>
<div style="position:absolute;left:227px;top:567px;width:590px;height:1px;background:#fff"></div>
<div class="t" style="left:225px;top:586px;font-size:12px">Имя журнала:</div>
<div class="t" style="left:346px;top:586px;font-size:12px">Система</div>
<div class="t" style="left:225px;top:610px;font-size:12px">Источник:</div>
<div class="t" style="left:346px;top:610px;font-size:12px">DistributedCOM</div>
<div class="t" style="left:225px;top:634px;font-size:12px">Код события:</div>
<div class="t" style="left:346px;top:634px;font-size:12px">10005</div>
<div class="t" style="left:225px;top:658px;font-size:12px">Уровень:</div>
<div class="t" style="left:346px;top:658px;font-size:12px">Ошибка</div>
<div class="t" style="left:225px;top:682px;font-size:12px">Пользов.:</div>
<div class="t" style="left:346px;top:682px;font-size:12px">Н/Д</div>
<div class="t" style="left:504px;top:657px;font-size:12px">Ключевые слова:</div>
<div class="t" style="left:613px;top:657px;font-size:12px">Классический</div>
<div class="t" style="left:504px;top:681px;font-size:12px">Компьютер:</div>
<div class="t" style="left:613px;top:681px;font-size:12px">NNN</div>
<div style="position:absolute;left:799px;top:640px;width:16px;height:64px;background:repeating-conic-gradient(#fff 0 25%,#d4d0c8 0 50%) 0 0/2px 2px"></div>
<div style="position:absolute;left:799px;top:640px;width:16px;height:18px;background:#d4d0c8;box-shadow:inset 1px 1px 0 #fff, inset -1px -1px 0 #404040, inset -2px -2px 0 #808080;"></div>
<div style="position:absolute;left:799px;top:688px;width:16px;height:16px;background:#d4d0c8;box-shadow:inset 1px 1px 0 #fff, inset -1px -1px 0 #404040, inset -2px -2px 0 #808080;"></div>
<svg style="position:absolute;left:799px;top:688px" width="16" height="16" viewBox="0 0 16 16"><path d="M8 11l4-4H4z" fill="#000"/></svg>
<div style="position:absolute;left:834px;top:71px;width:189px;height:648px;background:#fff;box-shadow:inset 1px 1px 0 #808080, inset 2px 2px 0 #404040, inset -1px -1px 0 #fff"></div>
<div style="position:absolute;left:836px;top:74px;width:186px;height:15px;background:#d8d5cd"></div>
<div style="position:absolute;left:836px;top:73px;width:186px;height:1px;background:#fff"></div>
<div style="position:absolute;left:836px;top:89px;width:186px;height:1px;background:#808080"></div>
<div style="position:absolute;left:836px;top:90px;width:186px;height:1px;background:#fff"></div>
<div class="t" style="left:842px;top:75px;font-weight:bold;color:#000">Действия</div>
<div style="position:absolute;left:836px;top:91px;width:186px;height:25px;background:linear-gradient(#a6c8ee,#6f94d2 40%,#2c4f9e 80%,#0a1f66)"></div>
<div class="t" style="left:842px;top:97px;font-weight:bold;color:#fff">Система</div>
<svg style="position:absolute;left:1006px;top:101px" width="10" height="6" viewBox="0 0 10 6"><path d="M5 0l5 5.5H0z" fill="#fff"/></svg>
<svg style="position:absolute;left:840px;top:122px" width="16" height="15" viewBox="0 0 16 15"><path d="M1 5h5l1 1h6v8H1z" fill="#e8c870" stroke="#b89840" stroke-width="0.8"/><path d="M3 8h12l-2 6H1z" fill="#f8e0a0" stroke="#b89840" stroke-width="0.8"/><path d="M12 1h2" stroke="#40a040"/></svg>
<div class="t" style="left:865px;top:121px;color:#1a1a30;letter-spacing:0.35px">Открыть сохраненный ...</div>
<svg style="position:absolute;left:841px;top:145px" width="15" height="16" viewBox="0 0 15 16"><path d="M1 1h13l-5 6v7l-3 1v-8z" fill="#9aa8b8" stroke="#607080" stroke-width="0.8"/><circle cx="5" cy="4" r="3" fill="#f8c020"/></svg>
<div class="t" style="left:865px;top:145px;color:#1a1a30;letter-spacing:0.35px">Создать настраиваемо...</div>
<div class="t" style="left:865px;top:168px;color:#1a1a30;letter-spacing:0.35px">Импорт настраиваемого...</div>
<div style="position:absolute;left:841px;top:189px;width:176px;height:1px;background:#c8c8c8"></div>
<div class="t" style="left:865px;top:193px;color:#1a1a30;letter-spacing:0.35px">Очистить журнал...</div>
<div class="t" style="left:700px;top:217px;color:#1a1a30;width:297px;text-align:right;letter-spacing:0.35px">Фильтр текущего журн...</div>
<div class="t" style="left:700px;top:289px;color:#1a1a30;width:298px;text-align:right;letter-spacing:0.35px">Сохранить все события...</div>
<div class="t" style="left:700px;top:313px;color:#1a1a30;width:296px;text-align:right;letter-spacing:0.35px">Привязать задачу к жу...</div>
<div style="position:absolute;left:841px;top:333px;width:176px;height:1px;background:#c8c8c8"></div>
<div class="t" style="left:865px;top:338px;color:#1a1a30;letter-spacing:0.35px">Вид</div>
<svg style="position:absolute;left:1007px;top:341px" width="7" height="10" viewBox="0 0 7 10"><path d="M1 0l5 5-5 5z" fill="#000"/></svg>
<div style="position:absolute;left:841px;top:358px;width:176px;height:1px;background:#c8c8c8"></div>
<div style="position:absolute;left:913px;top:371px;width:2px;height:3px;background:#302050"></div>
<div style="position:absolute;left:841px;top:383px;width:176px;height:1px;background:#c8c8c8"></div>
<div class="t" style="left:865px;top:388px;color:#1a1a30;letter-spacing:0.35px">Справка</div>
<svg style="position:absolute;left:1007px;top:391px" width="7" height="10" viewBox="0 0 7 10"><path d="M1 0l5 5-5 5z" fill="#000"/></svg>
<div style="position:absolute;left:836px;top:413px;width:186px;height:25px;background:linear-gradient(#a6c8ee,#6f94d2 40%,#2c4f9e 80%,#0a1f66)"></div>
<div class="t" style="left:700px;top:419px;font-weight:bold;color:#fff;width:296px;text-align:right">Событие 10005, Distribut...</div>
<svg style="position:absolute;left:1006px;top:423px" width="10" height="6" viewBox="0 0 10 6"><path d="M5 0l5 5.5H0z" fill="#fff"/></svg>
<div class="t" style="left:700px;top:442px;color:#1a1a30;width:260px;text-align:right;letter-spacing:0.35px">Свойства событий</div>
<div class="t" style="left:700px;top:466px;color:#1a1a30;width:299px;text-align:right;letter-spacing:0.35px">Привязать задачу к соб...</div>
<div class="t" style="left:700px;top:490px;color:#1a1a30;width:226px;text-align:right;letter-spacing:0.35px">Копировать</div>
<svg style="position:absolute;left:1007px;top:493px" width="7" height="10" viewBox="0 0 7 10"><path d="M1 0l5 5-5 5z" fill="#000"/></svg>
<div class="t" style="left:700px;top:514px;color:#1a1a30;width:296px;text-align:right;letter-spacing:0.35px">Сохранить выбранные ...</div>
<div style="position:absolute;left:841px;top:534px;width:176px;height:1px;background:#c8c8c8"></div>
<div style="position:absolute;left:913px;top:547px;width:2px;height:3px;background:#302050"></div>
<div style="position:absolute;left:841px;top:559px;width:176px;height:1px;background:#c8c8c8"></div>
<div class="t" style="left:865px;top:564px;color:#1a1a30;letter-spacing:0.35px">Справка</div>
<svg style="position:absolute;left:1007px;top:567px" width="7" height="10" viewBox="0 0 7 10"><path d="M1 0l5 5-5 5z" fill="#000"/></svg>
<div style="position:absolute;left:0px;top:719px;width:1024px;height:1px;background:#fff"></div>
<div style="position:absolute;left:0px;top:722px;width:804px;height:18px;box-shadow:inset 1px 1px 0 #808080, inset -1px -1px 0 #fff"></div>
<div style="position:absolute;left:806px;top:722px;width:131px;height:18px;box-shadow:inset 1px 1px 0 #808080, inset -1px -1px 0 #fff"></div>
<div style="position:absolute;left:939px;top:722px;width:83px;height:18px;box-shadow:inset 1px 1px 0 #808080, inset -1px -1px 0 #fff"></div>
<div style="position:absolute;left:0px;top:740px;width:1024px;height:28px;background:#d4d0c8;box-shadow:inset 0 1px 0 #d4d0c8, inset 0 2px 0 #fff"></div>
<div style="position:absolute;left:2px;top:744px;width:51px;height:22px;background:#d4d0c8;box-shadow:inset 1px 1px 0 #fff, inset -1px -1px 0 #404040, inset -2px -2px 0 #808080;"></div>
<svg style="position:absolute;left:4px;top:746px" width="17" height="17" viewBox="0 0 17 17"><path d="M1 4.5c2-1.5 4-1.5 6.5-0.5l-1 5.5c-2.5-1-4.5-1-6.5 0.5z" fill="#f25a22"/><path d="M8.5 4.3c2.5 1 4.5 1 6.5-0.3l-1 5.5c-2 1.3-4 1.3-6.5 0.3z" fill="#7cba2a"/><path d="M0 11c2-1.5 4-1.5 6.5-0.5l-1 5.5c-2.5-1-4.5-1-6.5 0.5z" fill="#2a8ae8"/><path d="M7.5 10.8c2.5 1 4.5 1 6.5-0.3l-1 5.5c-2 1.3-4 1.3-6.5 0.3z" fill="#f8c018"/></svg>
<div class="t" style="left:22px;top:748px;font-weight:bold;font-size:12px;color:#000">Пуск</div>
<svg style="position:absolute;left:70px;top:746px" width="17" height="17" viewBox="0 0 17 17"><path d="M1 4h6l1 1h8v11H1z" fill="#f0d890" stroke="#c0a050" stroke-width="0.8"/><rect x="3" y="9" width="11" height="6" fill="#60a8e0"/></svg>
<svg style="position:absolute;left:104px;top:746px" width="17" height="17" viewBox="0 0 17 17"><rect x="0.5" y="0.5" width="16" height="16" fill="#a8c8e8" stroke="#6090c0"/><circle cx="8.5" cy="8.5" r="5.5" fill="#f09020"/><path d="M7 5.5v6l4.5-3z" fill="#fff"/></svg>
<svg style="position:absolute;left:137px;top:746px" width="17" height="17" viewBox="0 0 17 17"><circle cx="8.5" cy="8.5" r="8" fill="#e03a2a"/><path d="M8.5 8.5L15.4 12.5A8 8 0 0 1 2 13z" fill="#2aa040"/><path d="M8.5 8.5L2 13A8 8 0 0 1 8.5 0.5z" fill="#30a040"/><path d="M8.5 8.5L8.5 0.5A8 8 0 0 1 16 10z" fill="#e03a2a"/><path d="M8.5 8.5L16.3 9A8 8 0 0 1 8 16.5L5 12z" fill="#f8c820"/><circle cx="8.5" cy="8.5" r="3.8" fill="#fff"/><circle cx="8.5" cy="8.5" r="2.9" fill="#3878d8"/></svg>
<div style="position:absolute;left:164px;top:744px;width:32px;height:22px;background:#d4d0c8;box-shadow:inset 1px 1px 0 #fff, inset -1px -1px 0 #404040, inset -2px -2px 0 #808080;"></div>
<svg style="position:absolute;left:172px;top:746px" width="17" height="17" viewBox="0 0 17 17"><path d="M1.5 1.5h12l2 2v12h-14z" fill="#1a40c8" stroke="#10288a"/><rect x="5" y="1.5" width="6" height="4.5" fill="#e8ecf8"/><rect x="9" y="2.5" width="1.5" height="2.5" fill="#1a40c8"/><rect x="3" y="8.5" width="11" height="6" fill="#fff"/><path d="M4 10.5h9M4 12.5h9" stroke="#e03030" stroke-width="1"/></svg>
<div style="position:absolute;left:198px;top:744px;width:28px;height:22px;background:#d4d0c8;box-shadow:inset 1px 1px 0 #fff, inset -1px -1px 0 #404040, inset -2px -2px 0 #808080;"></div>
<div style="position:absolute;left:226px;top:744px;width:4px;height:22px;background:#d4d0c8;box-shadow:inset 1px 1px 0 #fff, inset -1px -1px 0 #404040, inset -2px -2px 0 #808080;"></div>
<svg style="position:absolute;left:204px;top:746px" width="18" height="18" viewBox="0 0 18 18"><rect x="0.5" y="0.5" width="16" height="11" rx="1" fill="#48a8e8" stroke="#2a70b8"/><circle cx="5" cy="5.5" r="2.5" fill="none" stroke="#fff" stroke-width="1.2"/><path d="M9 4h5M9 7h5" stroke="#fff" stroke-width="1.4"/><ellipse cx="8.5" cy="14.5" rx="3.5" ry="2.5" fill="#d0d0d0" stroke="#a0a0a0" stroke-width="0.6"/></svg>
<div style="position:absolute;left:232px;top:744px;width:28px;height:22px;background:#fff;box-shadow:inset 1px 1px 0 #404040, inset 2px 2px 0 #808080, inset -1px -1px 0 #fff"></div>
<svg style="position:absolute;left:239px;top:747px" width="15" height="15" viewBox="0 0 15 15"><rect x="2.5" y="0.5" width="11" height="14" fill="#f6f8fc" stroke="#56699a"/><path d="M3 3.5h10M3 5.5h10M3 7.5h10M3 9.5h10M3 11.5h10" stroke="#9eb2d6"/><path d="M0.5 2.5h2.5M0.5 4.5h2.5M0.5 6.5h2.5M0.5 8.5h2.5M0.5 10.5h2.5M0.5 12.5h2.5" stroke="#6a6a6a"/><path d="M8.5 1.2c1.8 0 2.6 1.2 2.6 2.6v2.6H5.9V3.8c0-1.4.8-2.6 2.6-2.6z" fill="#e8cc28" stroke="#a89018" stroke-width="0.5"/><rect x="8" y="2.6" width="1.1" height="2.3" fill="#303030"/><rect x="8" y="5.3" width="1.1" height="0.9" fill="#303030"/><circle cx="7.2" cy="10.4" r="2.9" fill="#c83838"/><path d="M6 9.2l2.4 2.4M8.4 9.2l-2.4 2.4" stroke="#fff" stroke-width="0.9"/></svg>
<div style="position:absolute;left:266px;top:744px;width:32px;height:22px;background:#d4d0c8;box-shadow:inset 1px 1px 0 #fff, inset -1px -1px 0 #404040, inset -2px -2px 0 #808080;"></div>
<svg style="position:absolute;left:273px;top:745px" width="18" height="18" viewBox="0 0 18 18"><path d="M8 4c4 0 7 2 7 5 0 2-2 2.5-3 2.5s-1.5 1-1 2c.5 1.5-1 2.5-3 2.5-4 0-7-2.5-7-6s3-6 7-6z" fill="#f4f4f8" stroke="#7890b0" stroke-width="0.8"/><circle cx="4.5" cy="9" r="1.2" fill="#e04040"/><circle cx="6" cy="6.5" r="1.2" fill="#40b040"/><circle cx="9" cy="6" r="1.2" fill="#f0c020"/><circle cx="7" cy="12" r="1.2" fill="#3070d0"/><path d="M15.5 1.5l-3 11" stroke="#e89030" stroke-width="2"/><circle cx="15.5" cy="1.8" r="1.4" fill="#e8a060"/></svg>
<div style="position:absolute;left:884px;top:744px;width:138px;height:21px;box-shadow:inset 1px 1px 0 #808080, inset -1px -1px 0 #fff"></div>
<svg style="position:absolute;left:890px;top:746px" width="18" height="18" viewBox="0 0 18 18"><path d="M2.5 1.5v15" stroke="#606060" stroke-width="1.4"/><path d="M3 2h6l1.5 1.5h4v6h-6L7 8H3z" fill="#fafafa" stroke="#808080" stroke-width="0.8"/><circle cx="11.5" cy="12.5" r="4.3" fill="#e83030" stroke="#fff" stroke-width="0.8"/><path d="M9.7 10.7l3.6 3.6M13.3 10.7l-3.6 3.6" stroke="#fff" stroke-width="1.3"/></svg>
<svg style="position:absolute;left:914px;top:746px" width="18" height="18" viewBox="0 0 18 18"><rect x="5.5" y="3.5" width="11" height="12" fill="#d8d8d8" stroke="#505050" stroke-width="1"/><rect x="7" y="5" width="8" height="7" fill="#909090"/><path d="M2 1v4c0 1 1 2 2 2s2-1 2-2V1" fill="none" stroke="#404040" stroke-width="1"/><path d="M4 7v10" stroke="#404040" stroke-width="1"/><path d="M7.5 10l8 7M15.5 10l-8 7" stroke="#e01818" stroke-width="2"/></svg>
<svg style="position:absolute;left:938px;top:746px" width="18" height="18" viewBox="0 0 18 18"><path d="M1.5 6h3l5-4.5v14L4.5 11h-3z" fill="#fafafa" stroke="#707070" stroke-width="0.9"/><circle cx="12.5" cy="12.5" r="4.3" fill="#e83030" stroke="#fff" stroke-width="0.8"/><path d="M10.7 10.7l3.6 3.6M14.3 10.7l-3.6 3.6" stroke="#fff" stroke-width="1.3"/></svg>
<div class="t" style="left:970px;top:748px;color:#000">14:16</div>
<svg style="position:absolute;left:1004px;top:749px" width="16" height="13" viewBox="0 0 16 13"><defs><linearGradient id="gd" x1="0" y1="0" x2="0" y2="1"><stop offset="0" stop-color="#2a60b8"/><stop offset="1" stop-color="#5a9ae0"/></linearGradient></defs><rect x="0" y="0" width="16" height="13" fill="#4a78b0"/><rect x="1" y="1" width="14" height="10" fill="url(#gd)"/><rect x="1" y="10" width="14" height="2" fill="#202830"/><circle cx="2.5" cy="10" r="1.5" fill="#60c0f0"/></svg>
<div style="position:absolute;left:282px;top:208px;width:632px;height:440px;background:#d4d0c8;box-shadow:inset 1px 1px 0 #d4d0c8, inset -1px -1px 0 #404040, inset 2px 2px 0 #fff, inset -2px -2px 0 #808080"></div>
<div style="position:absolute;left:286px;top:212px;width:624px;height:18px;background:linear-gradient(to right,#0a246a,#a6caf0)"></div>
<svg style="position:absolute;left:289px;top:214px" width="15" height="15" viewBox="0 0 15 15"><rect x="2.5" y="0.5" width="11" height="14" fill="#f6f8fc" stroke="#56699a"/><path d="M3 3.5h10M3 5.5h10M3 7.5h10M3 9.5h10M3 11.5h10" stroke="#9eb2d6"/><path d="M0.5 2.5h2.5M0.5 4.5h2.5M0.5 6.5h2.5M0.5 8.5h2.5M0.5 10.5h2.5M0.5 12.5h2.5" stroke="#6a6a6a"/><path d="M8.5 1.2c1.8 0 2.6 1.2 2.6 2.6v2.6H5.9V3.8c0-1.4.8-2.6 2.6-2.6z" fill="#e8cc28" stroke="#a89018" stroke-width="0.5"/><rect x="8" y="2.6" width="1.1" height="2.3" fill="#303030"/><rect x="8" y="5.3" width="1.1" height="0.9" fill="#303030"/><circle cx="7.2" cy="10.4" r="2.9" fill="#c83838"/><path d="M6 9.2l2.4 2.4M8.4 9.2l-2.4 2.4" stroke="#fff" stroke-width="0.9"/></svg>
<div class="t" style="left:306px;top:214px;font-weight:bold;color:#fff;font-size:11.5px">Свойства событий - Событие 10005, DistributedCOM</div>
<div style="position:absolute;left:891px;top:214px;width:16px;height:14px;background:#d4d0c8;box-shadow:inset 1px 1px 0 #fff, inset -1px -1px 0 #404040, inset -2px -2px 0 #808080;"></div>
<svg style="position:absolute;left:891px;top:214px" width="16" height="14" viewBox="0 0 16 14"><path d="M4 3l7 7M11 3l-7 7" stroke="#000" stroke-width="1.6"/></svg>
<div style="position:absolute;left:294px;top:261px;width:564px;height:326px;box-shadow:inset 1px 1px 0 #fff, inset -1px -1px 0 #404040, inset -2px -2px 0 #808080"></div>
<div style="position:absolute;left:349px;top:241px;width:85px;height:20px;background:#d4d0c8;box-shadow:inset 0 1px 0 #fff, inset -1px 0 0 #404040, inset -2px 0 0 #808080"></div>
<div class="t" style="left:354px;top:245px;font-size:12px;">Подробности</div>
<div style="position:absolute;left:294px;top:239px;width:56px;height:23px;background:#d4d0c8;box-shadow:inset 1px 1px 0 #fff, inset -1px 0 0 #404040, inset -2px 0 0 #808080"></div>
<div class="t" style="left:302px;top:243px;font-size:12px;">Общие</div>
<div style="position:absolute;left:309px;top:278px;width:524px;height:104px;box-shadow:inset 1px 1px 0 #808080, inset 2px 2px 0 #404040, inset -1px -1px 0 #fff, inset -2px -2px 0 #d4d0c8"></div>
<div class="t" style="left:312px;top:283px;font-size:12px;">Ошибка DCOM "1084" при попытке запуска службы MDM с аргументами "" для запуска</div>
<div class="t" style="left:312px;top:298px;font-size:12px;">сервера:</div>
<div class="t" style="left:312px;top:313px;font-size:12px;letter-spacing:-0.4px">{0C0A3666-30C9-11D0-8F20-00805F2CD064}</div>
<div class="t" style="left:307px;top:398px;font-size:12px;">Имя журнала:</div>
<div class="t" style="left:428px;top:398px;font-size:12px;">Система</div>
<div class="t" style="left:307px;top:422px;font-size:12px;">Источник:</div>
<div class="t" style="left:428px;top:422px;font-size:12px;">DistributedCOM</div>
<div class="t" style="left:307px;top:446px;font-size:12px;">Код события:</div>
<div class="t" style="left:428px;top:446px;font-size:12px;">10005</div>
<div class="t" style="left:307px;top:470px;font-size:12px;">Уровень:</div>
<div class="t" style="left:428px;top:470px;font-size:12px;">Ошибка</div>
<div class="t" style="left:307px;top:494px;font-size:12px;">Пользов.:</div>
<div class="t" style="left:428px;top:494px;font-size:12px;">Н/Д</div>
<div class="t" style="left:307px;top:518px;font-size:12px;">Код операции:</div>
<div class="t" style="left:428px;top:518px;font-size:12px;">Сведения</div>
<div class="t" style="left:307px;top:542px;font-size:12px;">Подробности:</div>
<div class="t" style="left:431px;top:542px;font-size:12px;color:#0000ff;text-decoration:underline">Веб-справка журнала</div>
<div class="t" style="left:586px;top:422px;font-size:12px;">Дата:</div>
<div class="t" style="left:695px;top:422px;font-size:12px;letter-spacing:-0.5px">30.11.2013 14:12:29</div>
<div class="t" style="left:586px;top:446px;font-size:12px;">Категория задачи:</div>
<div class="t" style="left:695px;top:446px;font-size:12px;">Отсутствует</div>
<div class="t" style="left:586px;top:470px;font-size:12px;">Ключевые слова:</div>
<div class="t" style="left:695px;top:470px;font-size:12px;">Классический</div>
<div class="t" style="left:586px;top:494px;font-size:12px;">Компьютер:</div>
<div class="t" style="left:695px;top:494px;font-size:12px;">NNN</div>
<div style="position:absolute;left:872px;top:382px;width:26px;height:25px;background:#d4d0c8;box-shadow:inset 1px 1px 0 #fff, inset -1px -1px 0 #404040, inset -2px -2px 0 #808080;"></div>
<div style="position:absolute;left:877px;top:387px;width:16px;height:16px;background:#f4f4f0"></div>
<svg style="position:absolute;left:877px;top:387px" width="16" height="16" viewBox="0 0 16 16"><path d="M8 2.5l5.5 5.5H10.5v5.5h-5V8H2.5z" fill="#707070" stroke="#404040" stroke-width="0.8"/></svg>
<div style="position:absolute;left:872px;top:419px;width:26px;height:25px;background:#d4d0c8;box-shadow:inset 1px 1px 0 #fff, inset -1px -1px 0 #404040, inset -2px -2px 0 #808080;"></div>
<div style="position:absolute;left:877px;top:424px;width:16px;height:16px;background:#f4f4f0"></div>
<svg style="position:absolute;left:877px;top:424px" width="16" height="16" viewBox="0 0 16 16"><path d="M8 13.5l5.5-5.5H10.5V2.5h-5V8H2.5z" fill="#707070" stroke="#404040" stroke-width="0.8"/></svg>
<div style="position:absolute;left:298px;top:607px;width:82px;height:25px;background:#d4d0c8;box-shadow:inset 1px 1px 0 #fff, inset -1px -1px 0 #404040, inset -2px -2px 0 #808080;"></div>
<div class="t" style="left:298px;top:613px;font-size:12px;width:82px;text-align:center">Копировать</div>
<div style="position:absolute;left:822px;top:607px;width:76px;height:25px;background:#d4d0c8;box-shadow:inset 1px 1px 0 #fff, inset -1px -1px 0 #404040, inset -2px -2px 0 #808080;"></div>
<div class="t" style="left:822px;top:613px;font-size:12px;width:76px;text-align:center">Закрыть</div>
</body></html>
